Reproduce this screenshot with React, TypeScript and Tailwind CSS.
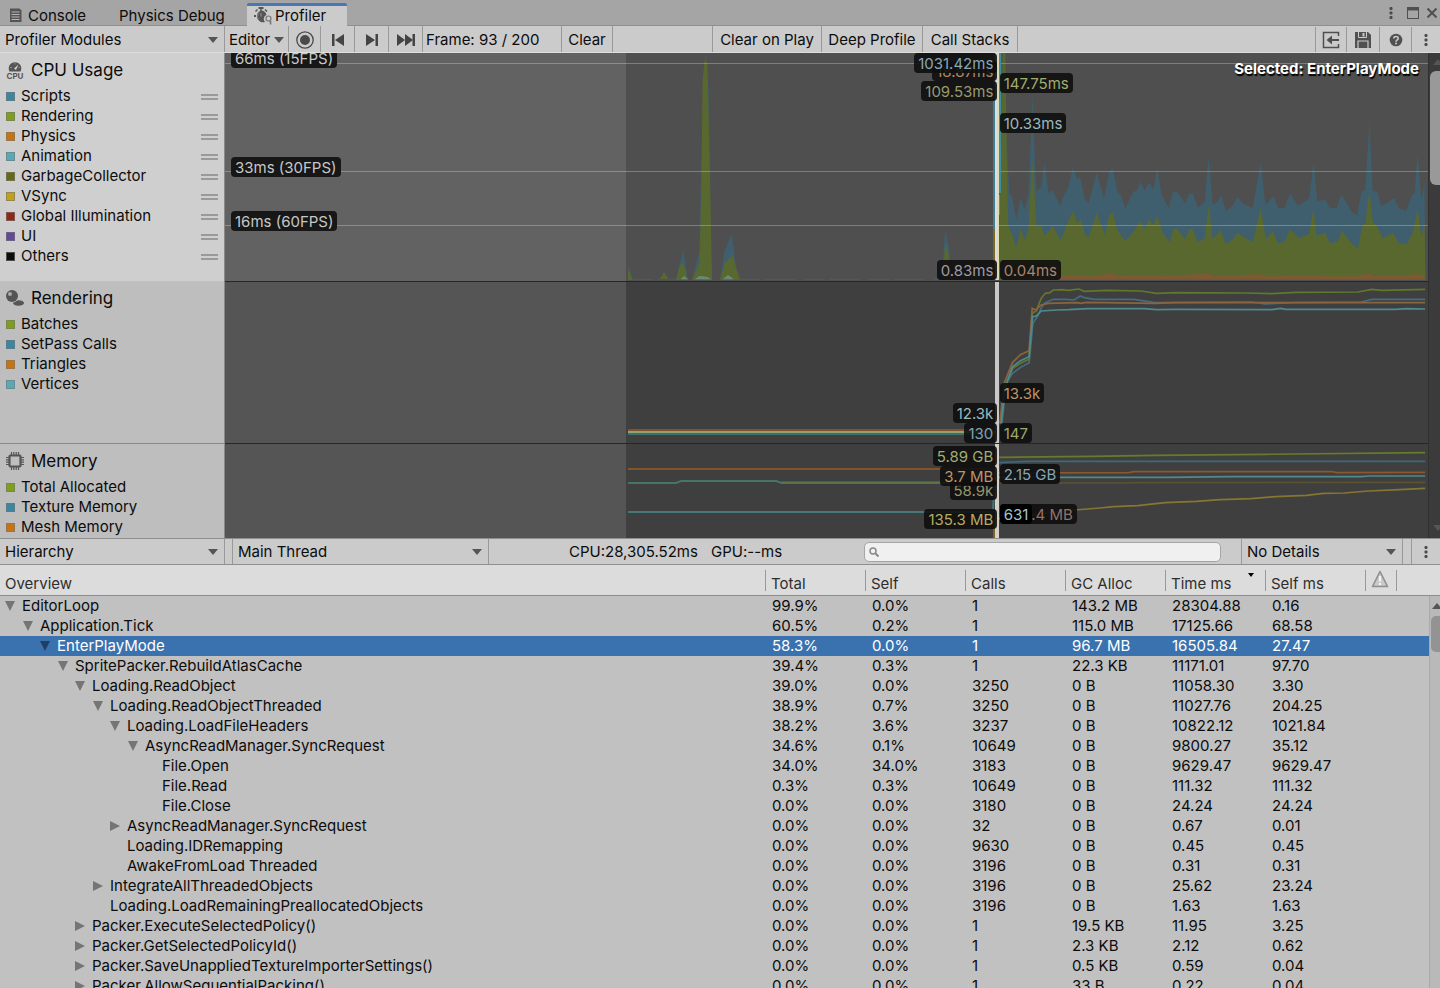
import type { ReactNode } from "react";
import clsx from "clsx";

interface Counter {
  name: string;
  color: string;
}

interface Tag {
  text: string;
  top: number;
  color: string;
  solid?: boolean;
}

interface SampleRow {
  name: string;
  level: number;
  state?: "open" | "closed";
  cells: string[];
}

const CPU_COUNTERS: Counter[] = [
  { name: "Scripts", color: "bg-[#3b86a0]" },
  { name: "Rendering", color: "bg-[#7f9e19]" },
  { name: "Physics", color: "bg-[#c9730f]" },
  { name: "Animation", color: "bg-[#57aab5]" },
  { name: "GarbageCollector", color: "bg-[#666a14]" },
  { name: "VSync", color: "bg-[#c4a017]" },
  { name: "Global Illumination", color: "bg-[#8c2a17]" },
  { name: "UI", color: "bg-[#64489a]" },
  { name: "Others", color: "bg-[#0c0c0c]" },
];

const RENDERING_COUNTERS: Counter[] = [
  { name: "Batches", color: "bg-[#7f9e19]" },
  { name: "SetPass Calls", color: "bg-[#3b86a0]" },
  { name: "Triangles", color: "bg-[#c9730f]" },
  { name: "Vertices", color: "bg-[#57aab5]" },
];

const MEMORY_COUNTERS: Counter[] = [
  { name: "Total Allocated", color: "bg-[#7f9e19]" },
  { name: "Texture Memory", color: "bg-[#3b86a0]" },
  { name: "Mesh Memory", color: "bg-[#c9730f]" },
];

const COLUMNS = ["Total", "Self", "Calls", "GC Alloc", "Time ms", "Self ms"];

const ROWS: SampleRow[] = [
  { name: "EditorLoop", level: 0, state: "open", cells: ["99.9%", "0.0%", "1", "143.2 MB", "28304.88", "0.16"] },
  { name: "Application.Tick", level: 1, state: "open", cells: ["60.5%", "0.2%", "1", "115.0 MB", "17125.66", "68.58"] },
  { name: "EnterPlayMode", level: 2, state: "open", cells: ["58.3%", "0.0%", "1", "96.7 MB", "16505.84", "27.47"] },
  { name: "SpritePacker.RebuildAtlasCache", level: 3, state: "open", cells: ["39.4%", "0.3%", "1", "22.3 KB", "11171.01", "97.70"] },
  { name: "Loading.ReadObject", level: 4, state: "open", cells: ["39.0%", "0.0%", "3250", "0 B", "11058.30", "3.30"] },
  { name: "Loading.ReadObjectThreaded", level: 5, state: "open", cells: ["38.9%", "0.7%", "3250", "0 B", "11027.76", "204.25"] },
  { name: "Loading.LoadFileHeaders", level: 6, state: "open", cells: ["38.2%", "3.6%", "3237", "0 B", "10822.12", "1021.84"] },
  { name: "AsyncReadManager.SyncRequest", level: 7, state: "open", cells: ["34.6%", "0.1%", "10649", "0 B", "9800.27", "35.12"] },
  { name: "File.Open", level: 8, cells: ["34.0%", "34.0%", "3183", "0 B", "9629.47", "9629.47"] },
  { name: "File.Read", level: 8, cells: ["0.3%", "0.3%", "10649", "0 B", "111.32", "111.32"] },
  { name: "File.Close", level: 8, cells: ["0.0%", "0.0%", "3180", "0 B", "24.24", "24.24"] },
  { name: "AsyncReadManager.SyncRequest", level: 6, state: "closed", cells: ["0.0%", "0.0%", "32", "0 B", "0.67", "0.01"] },
  { name: "Loading.IDRemapping", level: 6, cells: ["0.0%", "0.0%", "9630", "0 B", "0.45", "0.45"] },
  { name: "AwakeFromLoad Threaded", level: 6, cells: ["0.0%", "0.0%", "3196", "0 B", "0.31", "0.31"] },
  { name: "IntegrateAllThreadedObjects", level: 5, state: "closed", cells: ["0.0%", "0.0%", "3196", "0 B", "25.62", "23.24"] },
  { name: "Loading.LoadRemainingPreallocatedObjects", level: 5, cells: ["0.0%", "0.0%", "3196", "0 B", "1.63", "1.63"] },
  { name: "Packer.ExecuteSelectedPolicy()", level: 4, state: "closed", cells: ["0.0%", "0.0%", "1", "19.5 KB", "11.95", "3.25"] },
  { name: "Packer.GetSelectedPolicyId()", level: 4, state: "closed", cells: ["0.0%", "0.0%", "1", "2.3 KB", "2.12", "0.62"] },
  { name: "Packer.SaveUnappliedTextureImporterSettings()", level: 4, state: "closed", cells: ["0.0%", "0.0%", "1", "0.5 KB", "0.59", "0.04"] },
  { name: "Packer.AllowSequentialPacking()", level: 4, state: "closed", cells: ["0.0%", "0.0%", "1", "33 B", "0.22", "0.04"] },
];

const SELECTED_ROW = 2;

// Stacked area outlines, three units to a pixel
const SCRIPTS_AREA =
  "56,660 56,-30 64,-30 80,240 88,400 96,410 109,478 122,415 134,450 146,400 150,300 158,100 165,320 170,395 184,380 193,305 206,400 218,390 240,437 254,400 264,385 279,322 292,360 300,350 315,420 326,430 350,338 372,415 388,335 398,325 412,395 422,405 436,445 460,395 470,392 482,365 494,392 507,367 520,390 532,325 545,405 566,443 580,395 590,395 615,430 628,402 638,398 654,443 674,425 686,290 698,435 712,425 724,405 738,452 756,440 772,410 790,432 818,445 842,308 856,432 866,425 880,408 895,445 914,443 930,400 954,438 988,415 1001,303 1012,425 1036,418 1050,445 1070,443 1084,403 1116,457 1132,465 1144,395 1156,390 1168,185 1178,392 1192,397 1204,437 1228,425 1242,413 1256,445 1278,453 1296,405 1304,400 1313,280 1324,420 1334,370 1336,660";
const RENDERING_AREA =
  "56,660 68,-30 76,-30 82,400 85,500 96,520 109,563 122,505 134,540 146,505 150,420 158,300 165,420 170,500 184,497 193,525 206,515 218,497 242,540 256,505 279,452 292,490 303,478 315,525 326,530 350,460 375,525 388,462 398,458 412,510 436,543 460,515 482,483 494,510 507,478 520,495 532,467 548,518 568,547 580,508 590,505 615,537 628,508 638,507 654,548 674,535 686,435 698,537 722,510 738,553 756,540 772,518 818,547 842,445 858,537 880,513 893,550 914,545 930,508 956,535 988,522 1000,443 1010,527 1036,518 1050,550 1072,545 1086,513 1116,552 1134,565 1146,500 1156,490 1168,390 1178,485 1192,500 1208,535 1240,518 1256,550 1280,553 1300,515 1313,445 1324,530 1334,490 1336,660";
const PHYSICS_AREA =
  "80,660 80,648 275,646 330,649 398,639 412,648 530,646 560,649 686,640 700,649 842,643 860,649 1000,645 1040,649 1130,649 1168,638 1180,648 1240,644 1260,649 1313,642 1334,647 1334,657 80,657";

function Arrow({ className }: { className?: string }) {
  return (
    <svg viewBox="0 0 10 6" className={clsx("h-[6px] w-[10px] shrink-0 fill-[#555]", className)} aria-hidden="true">
      <path d="M0 0h10L5 6z" />
    </svg>
  );
}

function Dots({ className }: { className?: string }) {
  return (
    <svg viewBox="0 0 4 14" className={clsx("h-[14px] w-1 fill-[#4a4a4a]", className)} aria-hidden="true">
      <rect x="0.5" y="1" width="3" height="3" rx="1" />
      <rect x="0.5" y="5.5" width="3" height="3" rx="1" />
      <rect x="0.5" y="10" width="3" height="3" rx="1" />
    </svg>
  );
}

function Dropdown({ label, value, className }: { label: string; value: string; className?: string }) {
  return (
    <div className={clsx("relative flex items-center", className)}>
      <select aria-label={label} className="h-full w-full appearance-none bg-transparent pl-[5px] outline-none">
        <option>{value}</option>
      </select>
      <Arrow className="pointer-events-none absolute right-[6px]" />
    </div>
  );
}

function ToolButton({ label, className, children }: { label?: string; className?: string; children: ReactNode }) {
  return (
    <button
      type="button"
      aria-label={label}
      className={clsx("flex h-full shrink-0 items-center justify-center border-r border-[#999] whitespace-nowrap", className)}
    >
      {children}
    </button>
  );
}

function ConsoleIcon() {
  return (
    <svg viewBox="0 0 13 15" className="h-[15px] w-[13px]" aria-hidden="true">
      <path d="M1 .5h9.500l2 2V14H1z" fill="#555" />
      <path d="M2.500 4h8M2.500 6.500h8M2.500 9h8M2.500 11.500h8" stroke="#b5b5b5" />
    </svg>
  );
}

function ProfilerIcon() {
  return (
    <svg viewBox="0 0 19 18" className="h-[18px] w-[19px]" aria-hidden="true">
      <rect x="4.500" y="0" width="5" height="2" fill="#555" />
      <path d="M1.500 4.500l2-2M11 2.500l2 2M7 2v2" stroke="#555" strokeWidth="1.500" />
      <path d="M7 3.500a6 6 0 0 1 5.500 4.500c-3 1-3.500 4.500-1.500 7a6 6 0 1 1-4-11.500z" fill="#555" />
      <path d="M0 9h2" stroke="#555" strokeWidth="2" />
      <path d="M5 6.500a3.800 3.800 0 0 0 0 6" fill="none" stroke="#888" />
      <path d="M7 9.500V6" stroke="#999" />
      <circle cx="14.500" cy="11.500" r="2.500" fill="#cbcbcb" stroke="#777" strokeWidth="1.200" />
      <path d="M16.500 13.500v4" stroke="#777" strokeWidth="1.600" />
    </svg>
  );
}

function GaugeIcon() {
  return (
    <svg viewBox="0 0 20 20" className="h-5 w-5" aria-hidden="true">
      <path d="M4.500 11.500A6.300 6.300 0 1 1 15.500 11.500z" fill="#555" />
      <path d="M9 8.500l4.500-4-2.500 5.500z" fill="#cfcfcf" />
      <path d="M5 7.500h2M13.500 7.500h1.500M10 3v1.500" stroke="#8a8a8a" />
      <text x="10" y="19" textAnchor="middle" fontSize="8" fontWeight="700" fill="#555">
        CPU
      </text>
    </svg>
  );
}

function SphereIcon() {
  return (
    <svg viewBox="0 0 20 20" className="h-5 w-5" aria-hidden="true">
      <ellipse cx="13.500" cy="15" rx="5.500" ry="2.800" fill="#555" />
      <circle cx="7" cy="8" r="6.800" fill="#bebebe" />
      <circle cx="7" cy="8" r="6" fill="#555" />
      <circle cx="5" cy="6" r="2" fill="#aaa" />
    </svg>
  );
}

function ChipIcon() {
  return (
    <svg viewBox="0 0 20 20" className="h-5 w-5" fill="none" stroke="#555" aria-hidden="true">
      <rect x="4.500" y="4.500" width="11" height="11" rx="1" strokeWidth="2.200" />
      <path
        d="M6.500 1v3M8.800 1v3M11.200 1v3M13.500 1v3M6.500 16v3M8.800 16v3M11.200 16v3M13.500 16v3M1 6.500h3M1 8.800h3M1 11.200h3M1 13.500h3M16 6.500h3M16 8.800h3M16 11.200h3M16 13.500h3"
        strokeWidth="1.200"
      />
    </svg>
  );
}

function Legend({ counters, sortable }: { counters: Counter[]; sortable?: boolean }) {
  return (
    <ul>
      {counters.map((counter) => (
        <li key={counter.name} className="flex h-5 items-center gap-[6px] px-[6px]">
          <span className={clsx("size-[9px] border border-[#777]/60", counter.color)} />
          <span className="flex-1">{counter.name}</span>
          {sortable && <span className="mt-px h-[6px] w-[17px] border-y-2 border-[#9a9a9a]" />}
        </li>
      ))}
    </ul>
  );
}

function Tags({ side, tags }: { side: "left" | "right"; tags: Tag[] }) {
  return (
    <>
      {tags.map((tag) => (
        <span
          key={tag.text}
          className={clsx(
            "absolute h-5 rounded px-1 pt-px leading-5 whitespace-nowrap",
            side === "left" ? "right-[35.8%]" : "left-[64.4%]",
            tag.solid ? "bg-black" : "bg-[#0e0e0e]/90",
            tag.color
          )}
          style={{ top: tag.top }}
        >
          {tag.text}
        </span>
      ))}
    </>
  );
}

interface ModuleProps {
  title: string;
  icon: ReactNode;
  counters: Counter[];
  active?: boolean;
  className?: string;
  children: ReactNode;
}

function Module({ title, icon, counters, active, className, children }: ModuleProps) {
  return (
    <section className={clsx("flex overflow-hidden", className)}>
      <div className={clsx("w-[225px] shrink-0 border-r border-[#8a8a8a]", active ? "bg-[#cfcfcf]" : "bg-[#bebebe]")}>
        <h2 className="flex h-[33px] items-center gap-[6px] pl-[5px] text-[17px]">
          {icon}
          {title}
        </h2>
        <Legend counters={counters} sortable={active} />
      </div>
      <div className={clsx("relative min-w-0 flex-1 overflow-hidden", active ? "bg-[#4f4f4f]" : "bg-[#3f3f3f]")}>
        {children}
      </div>
    </section>
  );
}

function CpuChart() {
  return (
    <svg viewBox="225 53 1203 228" preserveAspectRatio="none" className="block h-full w-full" aria-hidden="true">
      <rect x="225" y="53" width="401" height="228" fill="#626262" />
      <g transform="translate(600 50) scale(.33333)">
        <path
          d="M84 690V648L98 685ZM228 690L250 598 264 690ZM276 690L298 605 306 250 317 9 326 120 334 690ZM360 690L372 610 395 550 408 650 420 690ZM1026 690L1035 542 1047 590 1054 690Z"
          fill="#3f5f6e"
        />
        <path
          d="M84 690V655L98 690ZM180 688L192 666 206 688ZM228 690L240 645 250 640 264 690ZM276 690L299 638 303 450 308 90 314 30 322 40 330 380 336 690ZM360 690L374 640 398 615 410 660 420 690ZM1026 690L1036 580 1044 605 1054 690Z"
          fill="#59682f"
        />
        <path d="M242 688L252 678 264 688ZM284 688L298 678 320 680 334 688ZM368 688L384 675 402 688Z" fill="#688c72" />
        <path d="M100 688H180M206 688H228M420 688H1180" stroke="#47605f" strokeWidth="3" strokeDasharray="60 14 90 30" />
      </g>
      <g transform="translate(980 60) scale(.33333)">
        <polygon points={SCRIPTS_AREA} fill="#3f5f6e" />
        <polygon points={RENDERING_AREA} fill="#59682f" />
        <polygon points={PHYSICS_AREA} fill="#7d5a31" />
      </g>
      <path d="M225 63.500H1428M225 171.500H1428M225 225.500H1428" stroke="#fff" strokeOpacity="0.270" />
      <rect x="993" y="53" width="2" height="176" fill="#3f7f93" />
      <rect x="993" y="229" width="2" height="51" fill="#7d6a22" />
      <rect x="995" y="53" width="4" height="227" fill="#dcdcb0" />
      <rect x="995" y="53" width="2" height="227" fill="#ddd" />
      <rect x="999" y="53" width="2" height="140" fill="#3f8da3" />
      <rect x="999" y="195" width="1" height="20" fill="#b0702a" />
    </svg>
  );
}

function RenderingChart() {
  return (
    <svg viewBox="225 281 1203 162" preserveAspectRatio="none" className="block h-full w-full" fill="none" aria-hidden="true">
      <rect x="225" y="281" width="401" height="162" fill="#555" />
      <path d="M628 430H997" stroke="#80532c" strokeWidth="2" />
      <path d="M628 432H997" stroke="#93a175" strokeWidth="2" />
      <path d="M628 434H997" stroke="#3f7070" strokeWidth="2" />
      <g transform="translate(900 280) scale(.34435 .33333)" strokeWidth="5">
        <path d="M296 430L308 310 327 280 350 262 375 248 386 130 400 108 412 80 422 68 445 58 480 58 505 60 524 48 535 53 565 58 680 58 740 68 1020 66 1060 72 1140 68 1340 66 1370 58 1525 58" stroke="#426d83" />
        <path d="M292 430L304 320 327 265 350 250 375 238 384 100 396 92 410 55 422 40 435 38 445 30 470 29 490 31 520 27 535 34 600 31 700 33 745 40 800 38 1000 39 1080 41 1150 37 1330 36 1370 28 1400 31 1525 28" stroke="#62772a" />
        <path d="M290 430L302 310 327 247 350 224 375 212 384 85 394 90 410 75 430 70 515 68 525 70 540 67 740 70 800 68 1525 68" stroke="#8c643c" />
        <path d="M294 430L306 320 327 260 350 242 375 230 385 110 396 108 410 93 455 90 490 89 545 86 710 86 745 89 800 88 1080 89 1105 85 1120 88 1440 88 1470 86 1525 87" stroke="#50898e" />
      </g>
      <rect x="995" y="281" width="4" height="162" fill="#c9c9c9" />
      <path d="M225 281.500H1428" stroke="#262626" />
    </svg>
  );
}

function MemoryChart() {
  return (
    <svg viewBox="225 443 1203 95" preserveAspectRatio="none" className="block h-full w-full" fill="none" aria-hidden="true">
      <rect x="225" y="443" width="401" height="95" fill="#555" />
      <path d="M628 469H997" stroke="#83532c" strokeWidth="2" />
      <path d="M628 483H676L681 481H776L782 483H997" stroke="#477565" strokeWidth="2" />
      <path d="M782 482H997" stroke="#6d7a2a" />
      <path d="M628 512H993L995 470" stroke="#47777a" strokeWidth="2" />
      <g transform="translate(900 280) scale(.34435 .33333)" strokeWidth="5">
        <path d="M288 532L560 529 740 526 1060 523 1525 518" stroke="#657c2b" />
        <path d="M288 548L370 544 1525 544" stroke="#3c6a7d" />
        <path d="M288 579L665 578 678 575 1255 575 1268 578 1525 577" stroke="#8b582c" />
        <path d="M288 592L780 592 960 590 1340 590 1360 588 1525 588" stroke="#50898e" />
        <path d="M288 609L660 609 680 608 1525 607" stroke="#5c5230" />
        <path d="M288 716L508 690 580 684 620 680 690 677 770 668 860 664 930 659 1020 656 1090 650 1180 646 1230 640 1290 639 1360 633 1450 629 1525 625" stroke="#857731" />
      </g>
      <rect x="993" y="518" width="2" height="20" fill="#7a6524" />
      <rect x="995" y="443" width="4" height="95" fill="#d5d0c8" />
      <path d="M225 443.500H1428" stroke="#262626" />
    </svg>
  );
}

function Threshold({ text, className }: { text: string; className: string }) {
  return (
    <span className={clsx("absolute left-[6px] h-5 rounded bg-[#171717] px-1 pt-px leading-5 text-[#c8c8c8]", className)}>
      {text}
    </span>
  );
}

function TabBar() {
  return (
    <div className="flex h-[26px] shrink-0 items-end border-b border-[#8f8f8f] bg-[#a5a5a5]" role="tablist">
      <button type="button" role="tab" aria-selected="false" className="flex h-[19px] w-[119px] items-center gap-[6px] pl-[9px]">
        <ConsoleIcon />
        Console
      </button>
      <button type="button" role="tab" aria-selected="false" className="flex h-[19px] w-32 items-center">
        Physics Debug
      </button>
      <button
        type="button"
        role="tab"
        aria-selected="true"
        className="-mb-px flex h-[23px] w-[100px] items-center gap-[2px] rounded-t-[2px] border-t-[3px] border-[#4a76b3] bg-[#cbcbcb] pl-[7px]"
      >
        <ProfilerIcon />
        Profiler
      </button>
      <div className="ml-auto flex h-[25px] items-center gap-3 pr-[3px]">
        <button type="button" aria-label="Window menu" className="mr-[2px]">
          <Dots />
        </button>
        <button type="button" aria-label="Maximize">
          <svg viewBox="0 0 12 12" className="size-3" fill="none" stroke="#505050" aria-hidden="true">
            <rect x="0.500" y="0.500" width="11" height="11" />
            <path d="M0 2h12" strokeWidth="3" />
          </svg>
        </button>
        <button type="button" aria-label="Close" className="-ml-1">
          <svg viewBox="0 0 10 10" className="size-[10px]" stroke="#505050" strokeWidth="2" aria-hidden="true">
            <path d="M0.500 0.500l9 9M9.500 0.500l-9 9" />
          </svg>
        </button>
      </div>
    </div>
  );
}

function Toolbar() {
  return (
    <div className="flex h-[27px] shrink-0 items-center border-b border-[#dedede] bg-[#cbcbcb] [&>*]:pt-px">
      <Dropdown label="Profiler modules" value="Profiler Modules" className="h-full w-[225px] shrink-0 border-r border-[#999]" />
      <ToolButton className="w-16 gap-1">
        Editor
        <Arrow />
      </ToolButton>
      <ToolButton label="Record" className="w-8">
        <svg viewBox="0 0 18 18" className="size-[18px]" aria-hidden="true">
          <circle cx="9" cy="9" r="8.200" fill="none" stroke="#4a4a4a" strokeWidth="1.300" />
          <circle cx="9" cy="9" r="5" fill="#4a4a4a" />
        </svg>
      </ToolButton>
      <ToolButton label="Previous frame" className="w-[34px]">
        <svg viewBox="0 0 12 12" className="size-3 fill-[#444]" aria-hidden="true">
          <path d="M0 0h2.500v12H0zM12 0v12L3 6z" />
        </svg>
      </ToolButton>
      <ToolButton label="Next frame" className="w-[34px]">
        <svg viewBox="0 0 12 12" className="size-3 fill-[#444]" aria-hidden="true">
          <path d="M0 0v12l9-6zM9.500 0H12v12H9.500z" />
        </svg>
      </ToolButton>
      <ToolButton label="Last frame" className="w-[34px]">
        <svg viewBox="0 0 18 12" className="h-3 w-[18px] fill-[#444]" aria-hidden="true">
          <path d="M0 0v12l8-6zM8 0v12l8-6zM15.500 0H18v12h-2.500z" />
        </svg>
      </ToolButton>
      <span className="w-[138px] shrink-0 pl-[3px] whitespace-nowrap">Frame: 93 / 200</span>
      <ToolButton className="w-[52px] border-l">Clear</ToolButton>
      <ToolButton className="ml-[99px] w-[110px] border-l">Clear on Play</ToolButton>
      <ToolButton className="w-[101px]">Deep Profile</ToolButton>
      <ToolButton className="w-[95px]">Call Stacks</ToolButton>
      <div className="ml-auto flex h-full">
        <ToolButton label="Load" className="w-8 border-l">
          <svg viewBox="0 0 18 18" className="size-[18px]" fill="none" stroke="#505050" strokeWidth="1.500" aria-hidden="true">
            <path d="M16.500 5V1.500H1.500v15h15V13" />
            <path d="M8 9h9" strokeWidth="2" />
            <path d="M4.500 9L10 4.500v9z" fill="#505050" stroke="none" />
          </svg>
        </ToolButton>
        <ToolButton label="Save" className="w-[33px]">
          <svg viewBox="0 0 16 16" className="size-4" aria-hidden="true">
            <path d="M0 0h13l3 3v13H0z" fill="#505050" />
            <path d="M3.500 0v5.500h8V0" stroke="#cbcbcb" fill="none" />
            <path d="M8.500 1v3.500" stroke="#cbcbcb" strokeWidth="2" />
            <path d="M3 16V9h10v7" stroke="#cbcbcb" fill="none" strokeWidth="1.200" />
          </svg>
        </ToolButton>
        <ToolButton label="Help" className="w-8">
          <svg viewBox="0 0 14 14" className="size-[14px]" aria-hidden="true">
            <circle cx="7" cy="7" r="6.300" fill="#505050" />
            <path d="M4.800 5.500C4.800 2.800 9.200 2.800 9.200 5.400 9.200 7 7 6.800 7 8.700" fill="none" stroke="#cbcbcb" strokeWidth="1.600" />
            <circle cx="7" cy="10.600" r="1" fill="#cbcbcb" />
          </svg>
        </ToolButton>
        <button type="button" aria-label="More options" className="flex w-[28px] items-center justify-center">
          <Dots />
        </button>
      </div>
    </div>
  );
}

function DetailsBar() {
  return (
    <div className="flex h-[27px] shrink-0 items-center border-t border-b border-[#8f8f8f] bg-[#cbcbcb]">
      <Dropdown label="View" value="Hierarchy" className="h-full w-[225px] shrink-0 border-r border-[#999]" />
      <Dropdown label="Thread" value="Main Thread" className="ml-[7px] h-full w-[257px] shrink-0 border-x border-[#999]" />
      <span className="ml-20 w-[142px] shrink-0 whitespace-nowrap">CPU:28,305.52ms</span>
      <span className="w-[153px] shrink-0 whitespace-nowrap">GPU:--ms</span>
      <label className="flex h-5 flex-1 items-center rounded-[5px] border border-[#a5a5a5] bg-[#f0f0f0] pl-1">
        <svg viewBox="0 0 10 10" className="size-[10px]" fill="none" stroke="#8a8a8a" aria-hidden="true">
          <circle cx="4" cy="4" r="3" strokeWidth="1.500" />
          <path d="M6.500 6.500L9.500 9.500" strokeWidth="2" />
        </svg>
        <input type="search" aria-label="Search samples" className="min-w-0 flex-1 bg-transparent px-1 outline-none" />
      </label>
      <Dropdown label="Details" value="No Details" className="ml-5 h-full w-[162px] shrink-0 border-x border-[#999]" />
      <button type="button" aria-label="More options" className="ml-2 flex h-full w-[29px] shrink-0 items-center justify-center border-l border-[#999]">
        <Dots />
      </button>
    </div>
  );
}

function HeaderCell({ children, first }: { children?: ReactNode; first?: boolean }) {
  return (
    <th scope="col" className="h-[31px] border-b border-[#8c8c8c] p-0 text-left align-top font-normal text-[#2e2e2e]">
      <div className={clsx("relative mt-[5px] h-[21px] leading-7", first ? "pl-[5px]" : "border-l border-[#999] pl-[5px]")}>
        {children}
      </div>
    </th>
  );
}

function HierarchyTable() {
  return (
    <div className="relative min-h-0 flex-1 overflow-hidden bg-[#c1c1c1]">
      <table className="w-full table-fixed border-separate border-spacing-0">
        <colgroup>
          <col />
          {COLUMNS.map((column) => (
            <col key={column} className="w-[100px]" />
          ))}
          <col className="w-[31px]" />
          <col className="w-11" />
        </colgroup>
        <thead className="bg-[#dcdcdc]">
          <tr>
            <HeaderCell first>Overview</HeaderCell>
            {COLUMNS.map((column) => (
              <HeaderCell key={column}>
                {column}
                {column === "Time ms" && (
                  <svg viewBox="0 0 6 4" className="absolute top-[3px] right-[11px] h-1 w-[6px]" aria-hidden="true">
                    <path d="M0 0h6L3 4z" />
                  </svg>
                )}
              </HeaderCell>
            ))}
            <HeaderCell>
              <svg viewBox="0 0 18 18" className="mt-[5px] size-[18px]" role="img" aria-label="Warnings">
                <path d="M9 1.500L16.500 16.500H1.500z" fill="#c9c9c9" stroke="#8f8f8f" strokeWidth="1.600" strokeLinejoin="round" />
                <path d="M9 6v5.500M9 13v2" stroke="#f5f5f5" strokeWidth="2" />
              </svg>
            </HeaderCell>
            <HeaderCell />
          </tr>
        </thead>
        <tbody>
          {ROWS.map((row, index) => {
            const selected = index === SELECTED_ROW;
            return (
              <tr key={index} aria-selected={selected} className={clsx(selected && "bg-[#3a72b0] text-white")}>
                <td className="h-5 p-0">
                  <div className="flex h-5 items-center" style={{ paddingLeft: Math.round(5 + row.level * 17.5) }}>
                    <span className="flex w-[17px] shrink-0">
                      {row.state && (
                        <button type="button" aria-label={row.state === "open" ? "Collapse" : "Expand"}>
                          <svg
                            viewBox="0 0 10 10"
                            className={clsx("size-[10px]", selected ? "fill-[#1f3f66]" : "fill-[#757575]")}
                            aria-hidden="true"
                          >
                            <path d={row.state === "open" ? "M0 0h10L5 10z" : "M0 0v10l10-5z"} />
                          </svg>
                        </button>
                      )}
                    </span>
                    <span className="whitespace-nowrap">{row.name}</span>
                  </div>
                </td>
                {row.cells.map((cell, i) => (
                  <td key={i} className="h-5 p-0 pl-[7px] leading-5">
                    {cell}
                  </td>
                ))}
                <td />
                <td />
              </tr>
            );
          })}
        </tbody>
      </table>
      {/* Scrollbar */}
      <div className="absolute top-[31px] right-0 bottom-0 w-[11px] border-l border-[#aaa] bg-[#b9b9b9]">
        <Arrow className="absolute top-[7px] left-[2px] rotate-180" />
        <div className="absolute top-[20px] left-[1px] h-9 w-4 rounded-[5px] bg-[#939393]" />
      </div>
    </div>
  );
}

export default function App() {
  return (
    <div className="flex h-screen min-w-[1240px] flex-col overflow-hidden bg-[#c1c1c1] font-['Inter',sans-serif] text-[15px] leading-5 text-[#0c0c0c]">
      <TabBar />
      <Toolbar />
      <div className="flex h-[485px] shrink-0 overflow-hidden">
        <div className="flex min-w-0 flex-1 flex-col">
          <Module title="CPU Usage" icon={<GaugeIcon />} counters={CPU_COUNTERS} active className="h-[228px] shrink-0">
            <CpuChart />
            <Threshold text="66ms (15FPS)" className="-top-[5px]" />
            <Threshold text="33ms (30FPS)" className="top-[104px]" />
            <Threshold text="16ms (60FPS)" className="top-[158px]" />
            <Tags
              side="left"
              tags={[
                { text: "18.87ms", top: 8, color: "text-[#b08a68]" },
                { text: "1031.42ms", top: 0, color: "text-[#86a9b8]" },
                { text: "109.53ms", top: 28, color: "text-[#9a9a72]" },
                { text: "0.83ms", top: 207, color: "text-[#a09aa6]" },
              ]}
            />
            <Tags
              side="right"
              tags={[
                { text: "147.75ms", top: 20, color: "text-[#a3ad70]" },
                { text: "10.33ms", top: 60, color: "text-[#9ababd]" },
                { text: "0.04ms", top: 207, color: "text-[#ab8470]" },
              ]}
            />
            <p className="absolute top-[6px] right-[9px] font-bold text-white [text-shadow:1px_2px_1px_#000]">
              Selected: EnterPlayMode
            </p>
          </Module>
          <Module title="Rendering" icon={<SphereIcon />} counters={RENDERING_COUNTERS} className="h-[162px] shrink-0">
            <RenderingChart />
            <Tags
              side="left"
              tags={[
                { text: "12.3k", top: 122, color: "text-[#96bcbe]" },
                { text: "130", top: 142, color: "text-[#7fa3b3]" },
              ]}
            />
            <Tags
              side="right"
              tags={[
                { text: "13.3k", top: 102, color: "text-[#bd9468]" },
                { text: "147", top: 142, color: "text-[#9fa96e]" },
              ]}
            />
          </Module>
          <Module
            title="Memory"
            icon={<ChipIcon />}
            counters={MEMORY_COUNTERS}
            className="min-h-0 flex-1 [&>div:first-child]:border-t [&>div:first-child]:border-t-[#8a8a8a]"
          >
            <MemoryChart />
            <Tags
              side="left"
              tags={[
                { text: "58.9k", top: 37, color: "text-[#96966e]" },
                { text: "5.89 GB", top: 3, color: "text-[#a3ad70]" },
                { text: "3.7 MB", top: 23, color: "text-[#bd9468]" },
                { text: "135.3 MB", top: 66, color: "text-[#b8ab62]" },
              ]}
            />
            <Tags
              side="right"
              tags={[
                { text: "2.15 GB", top: 21, color: "text-[#82a8b8]" },
                { text: "639.4 MB", top: 61, color: "text-[#94726a]" },
                { text: "631", top: 61, color: "text-[#a5c6c8]", solid: true },
              ]}
            />
          </Module>
        </div>
        {/* Scrollbar */}
        <div className="relative w-3 shrink-0 overflow-hidden border-l border-[#303030] bg-[#3b3b3b]">
          <Arrow className="absolute top-[6px] left-1 rotate-180" />
          <div className="absolute top-[18px] left-[1px] h-[114px] w-4 rounded-[6px] bg-[#999]" />
          <Arrow className="absolute bottom-[7px] left-1" />
        </div>
      </div>
      <DetailsBar />
      <HierarchyTable />
    </div>
  );
}
